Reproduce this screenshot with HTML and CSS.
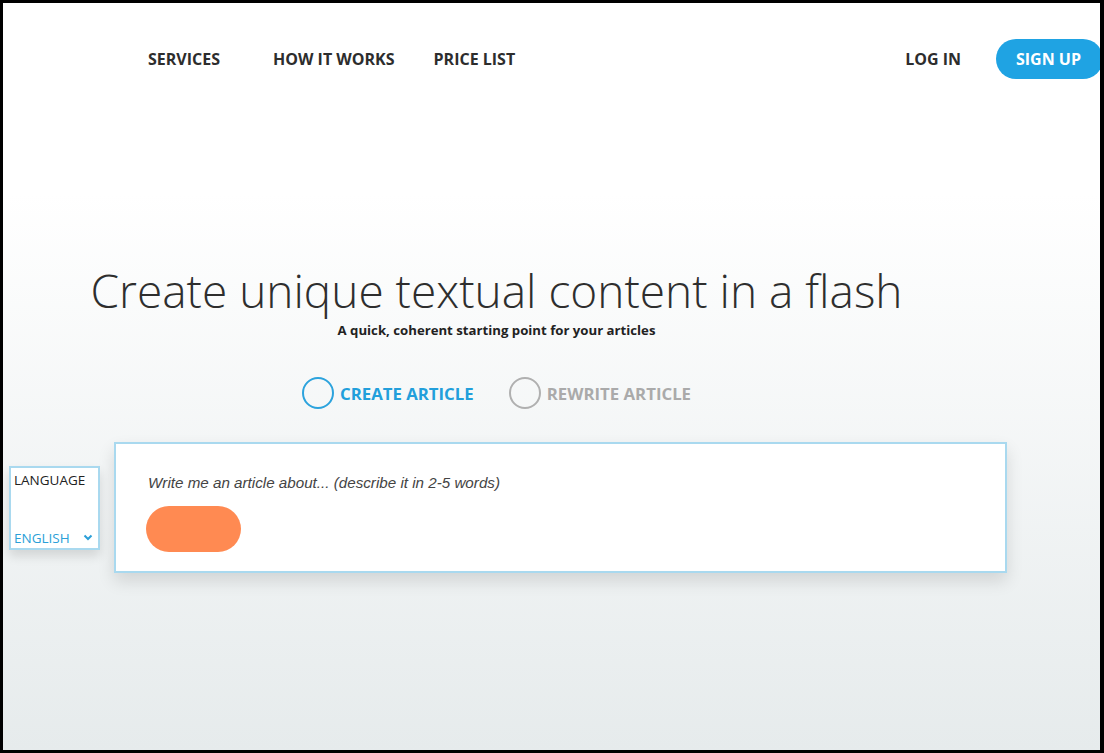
FILE: index.html
```html
<!DOCTYPE html>
<html lang="en">
<head>
  <meta charset="UTF-8">
  <title>Article Generator</title>
  <link rel="stylesheet" href="styles.css">
</head>
<body>
  <div class="frame">
    <header class="topbar">
      <nav class="menu">
        <a href="#" class="menu-link">SERVICES</a>
        <a href="#" class="menu-link">HOW IT WORKS</a>
        <a href="#" class="menu-link">PRICE LIST</a>
      </nav>
      <div class="account">
        <a href="#" class="login">LOG IN</a>
        <a href="#" class="signup">SIGN UP</a>
      </div>
    </header>

    <section class="hero">
      <h1>Create unique textual content in a flash</h1>
      <p class="subtitle">A quick, coherent starting point for your articles</p>

      <div class="modes">
        <label class="mode active"><span class="ring"></span>CREATE ARTICLE</label>
        <label class="mode"><span class="ring"></span>REWRITE ARTICLE</label>
      </div>
    </section>

    <section class="workspace">
      <div class="language">
        <div class="language-title">LANGUAGE</div>
        <div class="language-value">
          <span>ENGLISH</span>
          <svg width="10" height="7" viewBox="0 0 10 7"><path d="M1.5 1.5 L5 5 L8.5 1.5" fill="none" stroke="#2b9fd8" stroke-width="2"/></svg>
        </div>
      </div>

      <div class="card">
        <div class="prompt">Write me an article about... (describe it in 2-5 words)</div>
        <button class="go"></button>
      </div>
    </section>
  </div>
</body>
</html>
```

FILE: styles.css
```css
html, body {
  margin: 0;
  padding: 0;
}
body {
  font-family: 'Open Sans', sans-serif;
  color: #333;
}
.frame {
  box-sizing: border-box;
  width: 1104px;
  height: 753px;
  border: 3px solid #000;
  border-right-width: 4px;
  overflow: hidden;
  background: linear-gradient(to bottom, #fff 0px, #fff 190px, #e6ebec 100%);
}
a {
  text-decoration: none;
}

/* header */
.topbar {
  display: flex;
  justify-content: space-between;
  align-items: center;
  height: 40px;
  margin-top: 36px;
}
.menu {
  display: flex;
  gap: 39px;
  padding-left: 145px;
}
.menu-link, .login {
  font-size: 16px;
  font-weight: 700;
  color: #2d2d2d;
}
.menu-link:first-child {
  margin-right: 14px;
}
.account {
  display: flex;
  align-items: center;
  gap: 35px;
}
.signup {
  display: flex;
  align-items: center;
  height: 40px;
  padding: 0 22px 0 20px;
  margin-right: -3px;
  border-radius: 20px;
  background: #1fa3e3;
  color: #fff;
  font-size: 16px;
  font-weight: 700;
}

/* hero */
.hero {
  display: flex;
  flex-direction: column;
  align-items: center;
  padding-right: 110px;
  padding-top: 183px;
}
h1 {
  margin: 0;
  font-family: 'Open Sans', sans-serif;
  font-weight: 300;
  font-size: 46px;
  line-height: 56px;
  color: #2e2e2e;
}
.subtitle {
  margin: 3px 0 0;
  font-size: 13.2px;
  font-weight: 700;
  line-height: 18px;
  color: #222;
}
.modes {
  display: flex;
  gap: 35px;
  margin-top: 38px;
}
.mode {
  display: flex;
  align-items: center;
  gap: 6px;
  font-size: 16.8px;
  font-weight: 700;
  color: #aaa;
}
.mode.active {
  color: #229fdb;
}
.ring {
  box-sizing: border-box;
  width: 32px;
  height: 32px;
  border: 2px solid #b0b0b0;
  border-radius: 50%;
}
.mode.active .ring {
  border-color: #2ca3dd;
}

/* form */
.workspace {
  display: flex;
  align-items: center;
  gap: 14px;
  margin-top: 33px;
  padding-left: 6px;
}
.language {
  box-sizing: border-box;
  width: 91px;
  height: 84px;
  display: flex;
  flex-direction: column;
  justify-content: space-between;
  padding: 3px 5px 1px 3px;
  border: 2px solid #a9d9ef;
  background: #fff;
  box-shadow: 0 6px 10px rgba(0, 0, 0, 0.12);
  font-size: 13.5px;
}
.language-title {
  color: #222;
}
.language-value {
  display: flex;
  align-items: center;
  justify-content: space-between;
  color: #2b9fd8;
}
.card {
  box-sizing: border-box;
  width: 893px;
  height: 131px;
  padding: 30px 30px;
  border: 2px solid #a9d9ef;
  background: #fff;
  box-shadow: 0 8px 16px rgba(0, 0, 0, 0.12);
}
.prompt {
  font-family: 'Liberation Sans', Arial, sans-serif;
  font-style: italic;
  font-size: 15.2px;
  color: #444;
  padding-left: 2px;
}
.go {
  display: block;
  width: 95px;
  height: 46px;
  margin-top: 15px;
  border: none;
  border-radius: 23px;
  background: #ff8a52;
}
```
